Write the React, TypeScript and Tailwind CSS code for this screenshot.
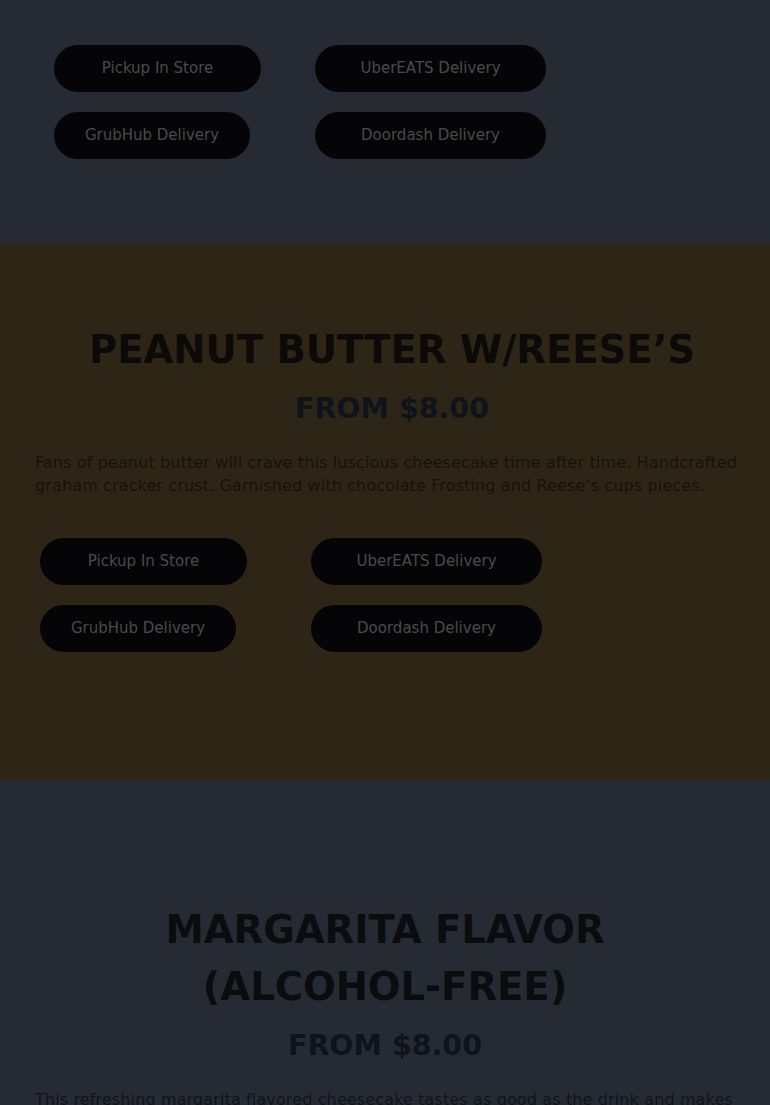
import React from "react";

const font = { fontFamily: '"DejaVu Sans", "Noto Sans", sans-serif' };

function Btn({ label, w }: { label: string; w: string }) {
  return (
    <div
      className={`flex h-[47px] items-center justify-center rounded-full bg-[#050507] text-[15px] font-medium text-[#4a4a4a] ${w}`}
    >
      {label}
    </div>
  );
}

export default function App() {
  return (
    <div style={font} className="w-[770px] overflow-hidden">
      {/* Top section */}
      <section className="relative h-[243px] bg-[#262b33]">
        <p className="absolute left-[35px] top-[-19px] text-[16px] leading-[23px] text-[#14161b]">
          up.
        </p>
        <div className="pt-[45px]">
          <div className="flex">
            <div className="w-[261px] pl-[54px]">
              <Btn label="Pickup In Store" w="w-[207px]" />
            </div>
            <div className="pl-[54px]">
              <Btn label="UberEATS Delivery" w="w-[231px]" />
            </div>
          </div>
          <div className="mt-[20px] flex">
            <div className="w-[261px] pl-[54px]">
              <Btn label="GrubHub Delivery" w="w-[196px]" />
            </div>
            <div className="pl-[54px]">
              <Btn label="Doordash Delivery" w="w-[231px]" />
            </div>
          </div>
        </div>
      </section>

      {/* Peanut butter section */}
      <section className="h-[537px] bg-[#2d2617] px-[35px] pt-[79px]">
        <h2 className="pl-[14px] text-center text-[38.5px] font-bold leading-[56px] text-[#0b0a08]">
          PEANUT BUTTER W/REESE’S
        </h2>
        <div className="mt-[7px] pl-[14px] text-center text-[28.5px] font-bold leading-[48px] text-[#0f131b]">
          FROM $8.00
        </div>
        <p className="mt-[18px] whitespace-nowrap text-[16px] leading-[23px] tracking-[0.13px] text-[#17130c]">
          Fans of peanut butter will crave this luscious cheesecake time after time. Handcrafted
          <br />
          graham cracker crust. Garnished with chocolate Frosting and Reese’s cups pieces.
        </p>
        <div className="mt-[41px]">
          <div className="flex">
            <div className="w-[276px] pl-[5px]">
              <Btn label="Pickup In Store" w="w-[207px]" />
            </div>
            <div>
              <Btn label="UberEATS Delivery" w="w-[231px]" />
            </div>
          </div>
          <div className="mt-[20px] flex">
            <div className="w-[276px] pl-[5px]">
              <Btn label="GrubHub Delivery" w="w-[196px]" />
            </div>
            <div>
              <Btn label="Doordash Delivery" w="w-[231px]" />
            </div>
          </div>
        </div>
      </section>

      {/* Margarita section */}
      <section className="bg-[#262b33] px-[35px] pt-[121px] pb-[40px]">
        <h2 className="text-center text-[38.5px] font-bold leading-[57px] text-[#0b0c0e]">
          MARGARITA FLAVOR
          <br />
          (ALCOHOL-FREE)
        </h2>
        <div className="mt-[7px] text-center text-[28.5px] font-bold leading-[48px] text-[#0f131b]">
          FROM $8.00
        </div>
        <p className="mt-[18px] whitespace-nowrap text-[16px] leading-[23px] tracking-[0.13px] text-[#121418]">
          This refreshing margarita flavored cheesecake tastes as good as the drink and makes
          <br />
          every bite a celebration. Handcrafted graham cracker crust.
        </p>
      </section>
    </div>
  );
}
